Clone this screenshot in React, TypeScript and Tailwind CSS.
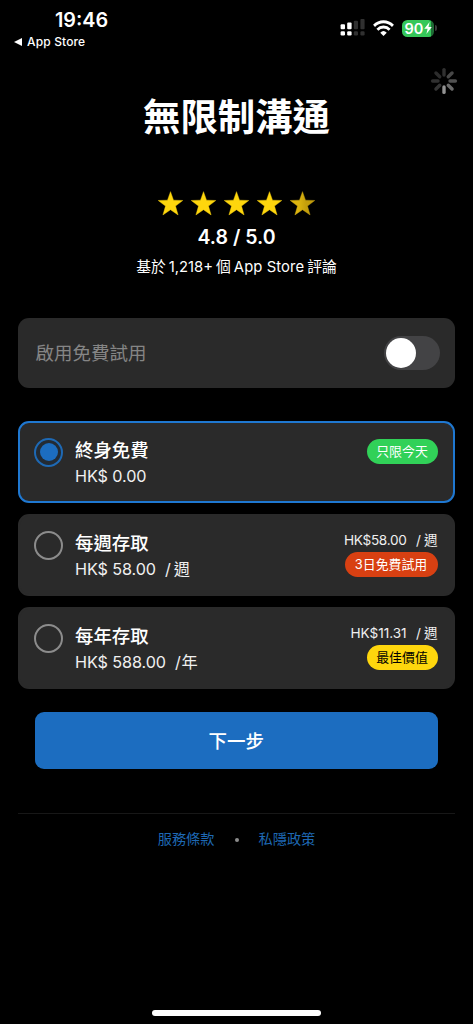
import React, { useState } from "react";

const STAR = "M12 0.6 L14.9 8.8 L23.8 9.1 L16.8 14.5 L19.3 23 L12 18 L4.7 23 L7.2 14.5 L0.2 9.1 L9.1 8.8 Z";

function Star({ partial = false }: { partial?: boolean }) {
  return (
    <svg viewBox="0 0 24 24" className="h-[25px] w-[25px]">
      <defs>
        <linearGradient id="fade">
          <stop offset="0.35" stopColor="#dcb40e" />
          <stop offset="0.65" stopColor="#c39e0c" />
        </linearGradient>
      </defs>
      <path d={STAR} fill={partial ? "url(#fade)" : "#fed60d"} stroke={partial ? "url(#fade)" : "#fed60d"} strokeWidth="0.4" strokeLinejoin="round" />
    </svg>
  );
}

function Signal() {
  return (
    <svg viewBox="0 0 25 18" className="h-[18px] w-[25px]">
      <g fill="#fff">
        <rect x="0.6" y="5.2" width="4.4" height="5" rx="1" />
        <rect x="7.2" y="3.6" width="4.4" height="6.6" rx="1" />
        <rect x="0.6" y="12.2" width="4.4" height="4.2" rx="1.2" />
        <rect x="7.2" y="12.2" width="4.4" height="4.2" rx="1.2" />
      </g>
      <g fill="#303030">
        <rect x="13.8" y="1.8" width="4.2" height="8.4" rx="1" />
        <rect x="20.4" y="0" width="4.2" height="10.2" rx="1" />
        <rect x="13.8" y="12.2" width="4.2" height="4.2" rx="1.2" />
        <rect x="20.4" y="12.2" width="4.2" height="4.2" rx="1.2" />
      </g>
    </svg>
  );
}

function Wifi() {
  return (
    <svg viewBox="0 0 22 16" className="h-4 w-[21px]" preserveAspectRatio="none">
      <g fill="none" stroke="#fff" strokeWidth="2.9">
        <path d="M1.1 5.9 A14 14 0 0 1 20.9 5.9" />
        <path d="M4.6 9.7 A9 9 0 0 1 17.4 9.7" />
      </g>
      <path d="M7.6 12.7 A5 5 0 0 1 14.4 12.7 L11 16 Z" fill="#fff" />
    </svg>
  );
}

function Battery() {
  return (
    <div className="flex items-center">
      <div className="flex h-[17px] w-[32px] items-center rounded-[5.5px] bg-linear-to-r from-[#35c759] from-90% to-[#1f6b35] to-90% pl-[2.5px]">
        <span className="text-[14.5px] leading-[17px] font-semibold tracking-[-0.1px]">90</span>
        <svg viewBox="0 0 8 12" className="ml-[0.5px] h-[12px] w-[8px]">
          <path d="M5.6 0 L0.3 6.8 H3.6 L2.4 12 L7.8 5 H4.5 Z" fill="#fff" />
        </svg>
      </div>
      <div className="ml-[1px] h-[6px] w-[2px] rounded-r-full bg-[#3a3a3a]" />
    </div>
  );
}

const SPOKES = ["#303030", "#484848", "#505050", "#6a6a6a", "#929292", "#343434", "#303030", "#2c2c2c"];

function Spinner() {
  return (
    <svg viewBox="-14 -14 28 28" className="h-7 w-7">
      {SPOKES.map((color, i) => (
        <line key={i} x1="0" y1="-6" x2="0" y2="-11.4" stroke={color} strokeWidth="3.4" strokeLinecap="round" transform={`rotate(${i * 45})`} />
      ))}
    </svg>
  );
}

type Plan = {
  title: string;
  price: string;
  unit?: string;
  weekly?: string;
  badge: string;
  badgeClass: string;
};

const PLANS: Plan[] = [
  { title: "終身免費", price: "HK$ 0.00", badge: "只限今天", badgeClass: "bg-[#31d158] text-white w-[71px]" },
  { title: "每週存取", price: "HK$ 58.00", unit: "週", weekly: "HK$58.00", badge: "3日免費試用", badgeClass: "bg-[#d84012] text-white w-[93px]" },
  { title: "每年存取", price: "HK$ 588.00", unit: "年", weekly: "HK$11.31", badge: "最佳價值", badgeClass: "bg-[#fed60d] text-black w-[71px]" },
];

function PlanCard({ plan, selected, onSelect }: { plan: Plan; selected: boolean; onSelect: () => void }) {
  return (
    <button
      type="button"
      onClick={onSelect}
      className={`flex h-[82px] w-full items-start rounded-[11px] border-2 bg-[#2a2a2a] pr-[15.5px] pl-[14px] text-left ${selected ? "border-[#1f78d1]" : "border-[#2a2a2a]"}`}
    >
      <span className={`mt-[14.5px] flex h-[29px] w-[29px] shrink-0 items-center justify-center rounded-full border-2 ${selected ? "border-[#1e69b4] bg-[#232b34]" : "border-[#8c8c8c]"}`}>
        {selected && <span className="h-[18px] w-[18px] rounded-full bg-[#1c6dc0]" />}
      </span>
      <span className="mt-[14px] ml-[12px] flex grow flex-col">
        <span className="h-[26px] text-[18.4px] leading-[26px] font-medium whitespace-nowrap">{plan.title}</span>
        <span className="flex h-[26px] items-center text-[16.2px] leading-[26px] tracking-[-0.1px] whitespace-nowrap text-[#f0f0f0]">
          {plan.price}
          {plan.unit && (
            <>
              <span className="ml-[9px]">/</span>
              <span className={plan.unit === "年" ? "ml-[1px]" : "ml-[3px]"}>{plan.unit}</span>
            </>
          )}
        </span>
      </span>
      <span className={`flex flex-col items-end ${plan.weekly ? "mt-[13px]" : "mt-[15.5px]"}`}>
        {plan.weekly && (
          <span className="flex h-[23px] text-[13.6px] leading-[23px] whitespace-nowrap text-[#f0f0f0]">
            <span className={plan.unit === "週" ? "tracking-[-0.3px]" : "tracking-[-0.05px]"}>{plan.weekly}</span>
            <span className="ml-[9.5px]">/</span>
            <span className="ml-[3px]">週</span>
          </span>
        )}
        <span className={`flex h-[25px] items-center justify-center rounded-full text-[12.9px] leading-[25px] whitespace-nowrap ${plan.badgeClass}`}>{plan.badge}</span>
      </span>
    </button>
  );
}

export default function App() {
  const [selected, setSelected] = useState(0);
  const [trial, setTrial] = useState(false);

  return (
    <div className="relative flex h-[1024px] w-[473px] flex-col overflow-hidden bg-black font-[Inter,'Noto_Sans_CJK_TC',sans-serif] text-white">
      <header className="flex h-[67px] shrink-0 items-start justify-between">
        <div className="flex flex-col">
          <span className="mt-[8px] ml-[55px] text-[19.8px] leading-6 font-semibold">19:46</span>
          <span className="ml-[14px] flex h-[19px] items-center text-[12px] leading-[19px] font-medium tracking-[0.15px]">
            <svg viewBox="0 0 8 8" className="mr-[5px] h-2 w-2">
              <path d="M0 4 L8 0 V8 Z" fill="#fff" />
            </svg>
            App Store
          </span>
        </div>
        <div className="mt-[19px] mr-[36px] flex h-[18px] items-center">
          <Signal />
          <div className="ml-[8px]"><Wifi /></div>
          <div className="ml-[8px]"><Battery /></div>
        </div>
      </header>
      <div className="flex h-[28px] shrink-0 justify-end pr-[15px]">
        <Spinner />
      </div>
      <h1 className="h-[46px] shrink-0 text-center text-[37.4px] leading-[46px] font-bold">無限制溝通</h1>

      <section className="mt-[49px] flex shrink-0 flex-col items-center">
        <div className="flex h-[26px] items-center gap-[8.2px]">
          <Star />
          <Star />
          <Star />
          <Star />
          <Star partial />
        </div>
        <p className="mt-[8px] h-[26px] text-[19.5px] leading-[26px] font-semibold">4.8 / 5.0</p>
        <p className="mt-[5px] flex h-[24px] gap-[3px] text-[14.8px] leading-[24px] whitespace-nowrap">
          <span>基於</span>
          <span>1,218+</span>
          <span>個</span>
          <span className="tracking-[0.1px]">App Store</span>
          <span>評論</span>
        </p>
      </section>

      <main className="mt-[39px] flex shrink-0 flex-col px-[18px]">
        <div className="flex h-[70px] items-center justify-between rounded-[11px] bg-[#2a2a2a] pr-[15px] pl-[17.5px]">
          <span className="text-[18.5px] leading-[26px] text-[#858585]">啟用免費試用</span>
          <button
            type="button"
            role="switch"
            aria-checked={trial}
            onClick={() => setTrial(!trial)}
            className={`flex h-[34px] w-[56px] items-center rounded-full p-[2px] ${trial ? "justify-end bg-[#31d158]" : "justify-start bg-[#434345]"}`}
          >
            <span className="h-[30px] w-[30px] rounded-full bg-white" />
          </button>
        </div>
        <div className="mt-[33px] flex flex-col gap-[11.2px]">
          {PLANS.map((plan, i) => (
            <PlanCard key={plan.title} plan={plan} selected={selected === i} onSelect={() => setSelected(i)} />
          ))}
        </div>
        <button type="button" className="mt-[22.6px] mr-[17.5px] ml-[17px] h-[57.5px] rounded-[9px] bg-[#1c6dc0] text-[18.5px] leading-[26px] font-medium">
          下一步
        </button>
      </main>

      <footer className="mx-[18px] mt-[44px] flex h-[50px] shrink-0 items-center justify-center border-t border-[#171717] text-[14.2px] leading-[20px] text-[#1e68b3]">
        <span>服務條款</span>
        <span className="mx-[20px] mt-[2px] h-1 w-1 rounded-full bg-[#8c8c8c]" />
        <span>私隱政策</span>
      </footer>
      <div className="mx-auto mt-auto mb-[8.5px] h-[6px] w-[169px] shrink-0 rounded-full bg-white" />
    </div>
  );
}
